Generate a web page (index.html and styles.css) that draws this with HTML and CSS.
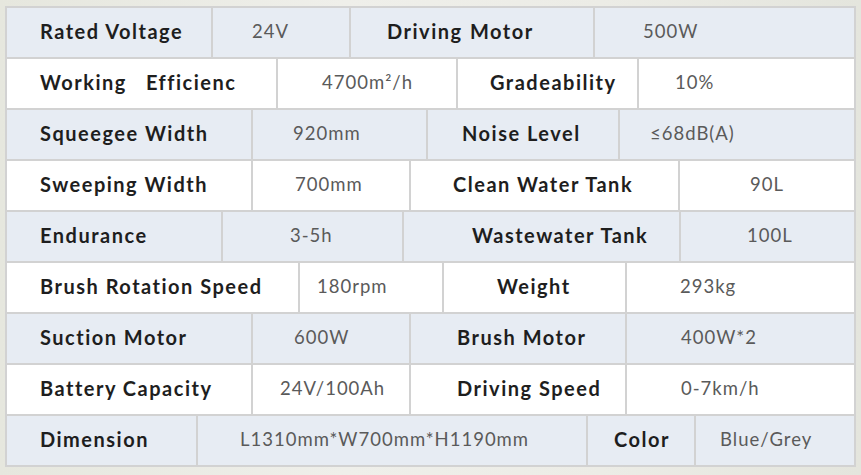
FILE: index.html
```html
<!DOCTYPE html>
<html lang="en">
<head>
<meta charset="utf-8">
<link rel="stylesheet" href="styles.css">
</head>
<body>
<div class="table">
  <div class="row blue r1">
    <div class="cell label">Rated Voltage</div>
    <div class="cell value">24V</div>
    <div class="cell label wide-gap">Driving Motor</div>
    <div class="cell value">500W</div>
  </div>
  <div class="row white r2">
    <div class="cell label">Working&nbsp;&nbsp; Efficienc</div>
    <div class="cell value">4700m²/h</div>
    <div class="cell label">Gradeability</div>
    <div class="cell value">10%</div>
  </div>
  <div class="row blue r3">
    <div class="cell label">Squeegee Width</div>
    <div class="cell value">920mm</div>
    <div class="cell label">Noise Level</div>
    <div class="cell value">≤68dB(A)</div>
  </div>
  <div class="row white r4">
    <div class="cell label">Sweeping Width</div>
    <div class="cell value">700mm</div>
    <div class="cell label">Clean Water Tank</div>
    <div class="cell value">90L</div>
  </div>
  <div class="row blue r5">
    <div class="cell label">Endurance</div>
    <div class="cell value">3-5h</div>
    <div class="cell label">Wastewater Tank</div>
    <div class="cell value">100L</div>
  </div>
  <div class="row white r6">
    <div class="cell label">Brush Rotation Speed</div>
    <div class="cell value">180rpm</div>
    <div class="cell label">Weight</div>
    <div class="cell value">293kg</div>
  </div>
  <div class="row blue r7">
    <div class="cell label">Suction Motor</div>
    <div class="cell value">600W</div>
    <div class="cell label">Brush Motor</div>
    <div class="cell value">400W*2</div>
  </div>
  <div class="row white r8">
    <div class="cell label">Battery Capacity</div>
    <div class="cell value">24V/100Ah</div>
    <div class="cell label">Driving Speed</div>
    <div class="cell value">0-7km/h</div>
  </div>
  <div class="row blue r9">
    <div class="cell label">Dimension</div>
    <div class="cell value">L1310mm*W700mm*H1190mm</div>
    <div class="cell label">Color</div>
    <div class="cell value">Blue/Grey</div>
  </div>
</div>
</body>
</html>
```

FILE: styles.css
```css
html, body {
  margin: 0;
  padding: 0;
}
body {
  width: 861px;
  height: 475px;
  overflow: hidden;
  background: linear-gradient(90deg, #e6e7de 0%, #efefea 40%, #ecece6 70%, #e4e5dd 100%);
  font-family: "Lato", "Noto Sans", sans-serif;
}
.table {
  margin: 6px 0 0 5px;
  width: 851px;
  box-sizing: border-box;
  padding: 2px;
  background: #d2d2d2;
  display: flex;
  flex-direction: column;
  gap: 2px;
}
.row {
  display: grid;
  gap: 2px;
  height: 49px;
}
.cell {
  display: flex;
  align-items: center;
  white-space: pre;
  box-sizing: border-box;
  padding-bottom: 3px;
}
.blue .cell { background: #e7ecf3; }
.white .cell { background: #ffffff; }
.label {
  font-weight: 700;
  font-size: 20px;
  color: #1e1e1e;
  letter-spacing: 1.5px;
}
.wide-gap { word-spacing: 1px; }
.value {
  font-weight: 400;
  font-size: 18.5px;
  color: #5a5a5a;
  letter-spacing: 1px;
}
.cell:first-child { padding-left: 33px; }

.r1 { grid-template-columns: 204px 136px 242px 259px; }
.r2 { grid-template-columns: 269px 178px 179px 215px; }
.r3 { grid-template-columns: 244px 173px 190px 234px; }
.r4 { grid-template-columns: 244px 156px 267px 174px; }
.r5 { grid-template-columns: 214px 179px 275px 173px; }
.r6 { grid-template-columns: 291px 142px 181px 227px; }
.r7 { grid-template-columns: 244px 156px 214px 227px; }
.r8 { grid-template-columns: 244px 156px 214px 227px; }
.r9 { grid-template-columns: 189px 388px 106px 158px; }

.r1 .cell:nth-child(2) { padding-left: 39px; }
.r1 .cell:nth-child(3) { padding-left: 36px; }
.r1 .cell:nth-child(4) { padding-left: 48px; }
.r2 .cell:nth-child(2) { padding-left: 44px; }
.r2 .cell:nth-child(3) { padding-left: 32px; }
.r2 .cell:nth-child(4) { padding-left: 36px; }
.r3 .cell:nth-child(2) { padding-left: 40px; }
.r3 .cell:nth-child(3) { padding-left: 34px; }
.r3 .cell:nth-child(4) { padding-left: 30px; }
.r4 .cell:nth-child(2) { padding-left: 42px; }
.r4 .cell:nth-child(3) { padding-left: 42px; }
.r4 .cell:nth-child(4) { padding-left: 70px; }
.r5 .cell:nth-child(2) { padding-left: 67px; }
.r5 .cell:nth-child(3) { padding-left: 68px; }
.r5 .cell:nth-child(4) { padding-left: 66px; }
.r6 .cell:nth-child(2) { padding-left: 17px; }
.r6 .cell:nth-child(3) { padding-left: 53px; }
.r6 .cell:nth-child(4) { padding-left: 53px; }
.r7 .cell:nth-child(2) { padding-left: 41px; }
.r7 .cell:nth-child(3) { padding-left: 46px; }
.r7 .cell:nth-child(4) { padding-left: 54px; }
.r8 .cell:nth-child(2) { padding-left: 27px; }
.r8 .cell:nth-child(3) { padding-left: 46px; }
.r8 .cell:nth-child(4) { padding-left: 54px; }
.r9 .cell:nth-child(2) { padding-left: 42px; }
.r9 .cell:nth-child(3) { padding-left: 26px; }
.r9 .cell:nth-child(4) { padding-left: 24px; }
```
